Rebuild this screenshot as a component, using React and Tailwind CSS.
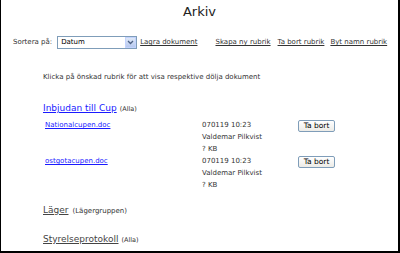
export default function App() {
  const docs = [
    { name: 'Nationalcupen.doc', date: '070119 10:23', by: 'Valdemar Pilkvist', size: '? KB' },
    { name: 'ostgotacupen.doc', date: '070119 10:23', by: 'Valdemar Pilkvist', size: '? KB' },
  ];

  return (
    <div className="w-[400px] h-[253px] overflow-hidden bg-white border-l border-r-2 border-b-2 border-black font-['DejaVu_Sans',sans-serif] text-[#333]">
      <h1 className="h-[24px] flex items-center justify-center text-[13px] text-[#222]">Arkiv</h1>

      <div className="mt-[12px] h-[13px] flex items-center pl-[12px] text-[7px]">
        <span>Sortera på:</span>
        <div className="ml-[5px] w-[80px] h-[13px] flex items-center border border-[#7f9db9] bg-white">
          <span className="flex-1 pl-[3px] text-[7px] text-black">Datum</span>
          <span className="w-[11px] h-[11px] flex items-center justify-center bg-gradient-to-b from-[#dfe8f7] to-[#b7c9ef] border border-[#c3d3fd]">
            <svg width="7" height="5" viewBox="0 0 7 5">
              <path d="M1 1 L3.5 3.5 L6 1" fill="none" stroke="#4d6185" strokeWidth="1.3" />
            </svg>
          </span>
        </div>
        <a className="ml-[3px] underline">Lagra dokument</a>
        <a className="ml-[18px] underline">Skapa ny rubrik</a>
        <a className="ml-[7px] underline">Ta bort rubrik</a>
        <a className="ml-[6px] underline">Byt namn rubrik</a>
      </div>

      <p className="mt-[23px] h-[10px] leading-[10px] pl-[42px] text-[7px]">
        Klicka på önskad rubrik för att visa respektive dölja dokument
      </p>

      <div className="mt-[20px] h-[14px] flex items-baseline pl-[42px]">
        <a className="text-[9px] text-[#1a1aff] underline">Inbjudan till Cup</a>
        <span className="ml-[3px] text-[6.5px]">(Alla)</span>
      </div>

      <div className="mt-[3px]">
        {docs.map((d) => (
          <div key={d.name} className="flex leading-[12px] text-[7px]">
            <a className="w-[201px] pl-[44px] text-[#1a1aff] underline">{d.name}</a>
            <div className="w-[96px]">
              <div>{d.date}</div>
              <div>{d.by}</div>
              <div>{d.size}</div>
            </div>
            <div>
              <button className="mt-[1px] h-[12px] w-[37px] leading-none text-[7.5px] text-black border border-[#7f9db9] rounded-[2px] bg-gradient-to-b from-white to-[#ecebe6]">
                Ta bort
              </button>
            </div>
          </div>
        ))}
      </div>

      <div className="mt-[13px] h-[14px] flex items-baseline pl-[42px]">
        <a className="text-[9px] text-[#444] underline">Läger</a>
        <span className="ml-[4px] text-[7px]">(Lägergruppen)</span>
      </div>

      <div className="mt-[15px] h-[14px] flex items-baseline pl-[42px]">
        <a className="text-[9px] text-[#444] underline">Styrelseprotokoll</a>
        <span className="ml-[3px] text-[6.5px]">(Alla)</span>
      </div>
    </div>
  );
}
